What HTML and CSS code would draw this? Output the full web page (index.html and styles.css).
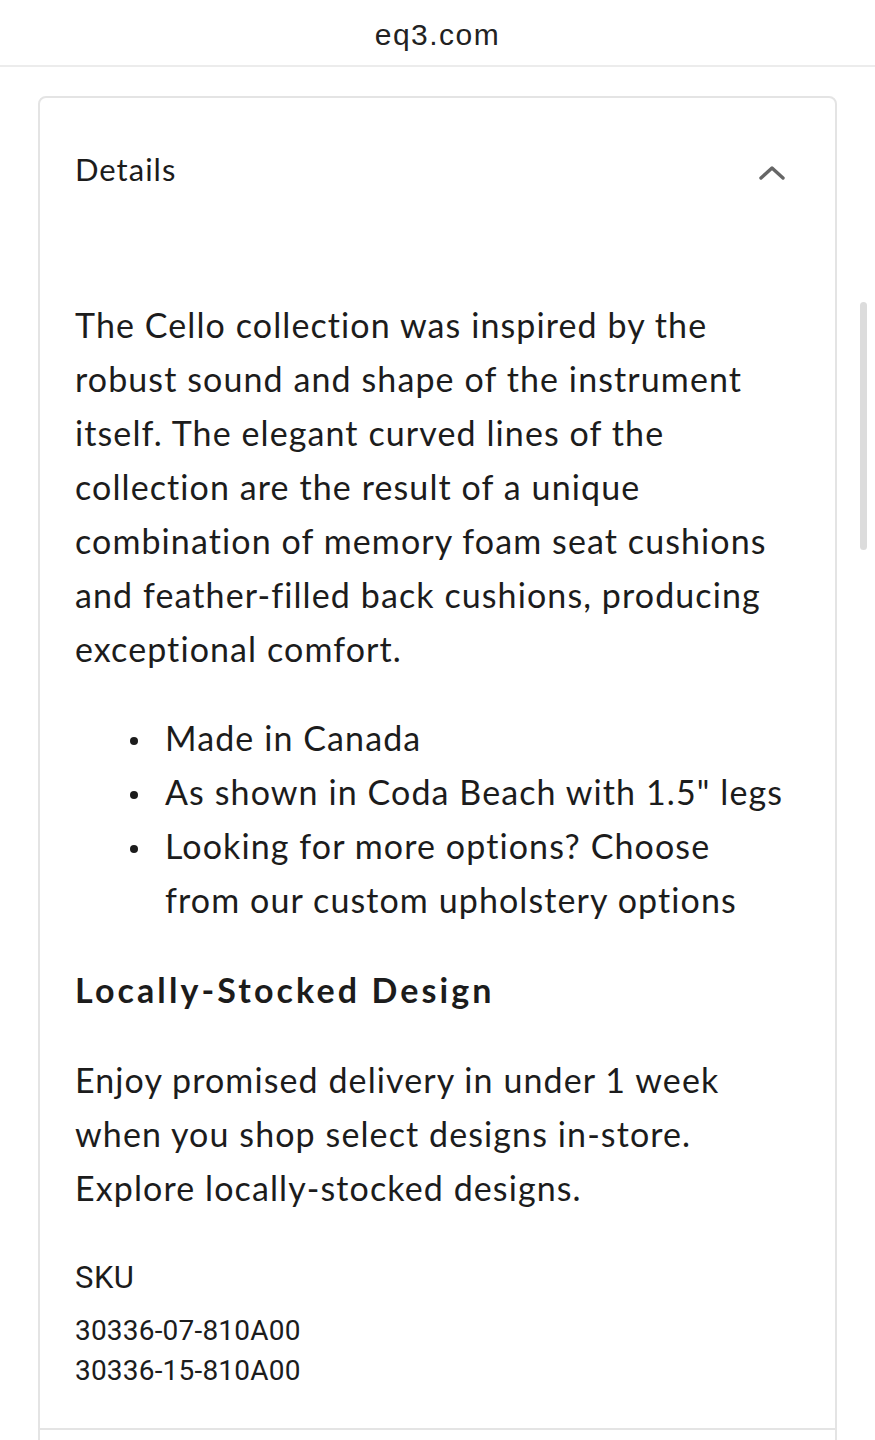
FILE: index.html
```html
<!DOCTYPE html>
<html lang="en">
<head>
<meta charset="utf-8">
<title>eq3.com – Details</title>
<link rel="stylesheet" href="styles.css">
</head>
<body>
<header class="topbar">
  <div class="domain">eq3.com</div>
</header>
<main class="page">
  <section class="accordion">
    <div class="acc-item">
      <div class="acc-head">
        <span class="acc-title">Details</span>
        <svg class="chev" width="28" height="16" viewBox="0 0 28 16" aria-hidden="true">
          <path d="M3 13 L14 3 L25 13" fill="none" stroke="#666" stroke-width="3.4" stroke-linecap="round" stroke-linejoin="round"/>
        </svg>
      </div>
      <div class="acc-body">
        <p class="copy">The Cello collection was inspired by the robust sound and shape of the instrument itself. The elegant curved lines of the collection are the result of a unique combination of memory foam seat cushions and feather-filled back cushions, producing exceptional comfort.</p>
        <ul class="bullets">
          <li>Made in Canada</li>
          <li>As shown in Coda Beach with 1.5" legs</li>
          <li>Looking for more options? Choose from our custom upholstery options</li>
        </ul>
        <h3 class="sub">Locally-Stocked Design</h3>
        <p class="copy">Enjoy promised delivery in under 1 week when you shop select designs in-store. Explore locally-stocked designs.</p>
        <div class="sku-label">SKU</div>
        <div class="sku-list">
          <div>30336-07-810A00</div>
          <div>30336-15-810A00</div>
        </div>
      </div>
    </div>
    <div class="acc-item next"></div>
  </section>
</main>
<div class="scroll-thumb"></div>
</body>
</html>
```
FILE: styles.css
```css
html, body {
  margin: 0;
  padding: 0;
  background: #ffffff;
}
body {
  font-family: Lato, "Open Sans", "Noto Sans", sans-serif;
  color: #1c1c1c;
  overflow: hidden;
}
.topbar {
  height: 65px;
  border-bottom: 2px solid #ececec;
  display: flex;
  align-items: center;
  justify-content: center;
}
.domain {
  font-family: "Liberation Sans", Arial, sans-serif;
  font-size: 30px;
  letter-spacing: 1.5px;
  color: #222;
  margin-top: 4px;
}
.page {
  padding: 29px 38px 0 38px;
}
.accordion {
  border: 2px solid #e4e4e4;
  border-radius: 8px;
}
.acc-head {
  height: 146px;
  padding: 0 49px 0 35px;
  display: flex;
  align-items: center;
  justify-content: space-between;
}
.acc-title {
  font-size: 31px;
  letter-spacing: 1px;
  margin-top: -4px;
}
.chev {
  display: block;
  margin-top: 4px;
}
.acc-body {
  padding: 54px 46px 37px 35px;
  border-bottom: 2px solid #e4e4e4;
}
.copy {
  margin: 0;
  font-size: 34px;
  line-height: 54px;
  letter-spacing: 1.1px;
}
.bullets {
  margin: 35px 0 0 0;
  padding: 0 0 0 90px;
  list-style: none;
  font-size: 34px;
  line-height: 54px;
  letter-spacing: 1.1px;
}
.bullets li {
  display: flex;
  margin-left: -35px;
}
.bullets li::before {
  content: "";
  flex: none;
  width: 8px;
  height: 8px;
  border-radius: 50%;
  background: #1c1c1c;
  margin: 26px 27px 0 0;
}
.sub {
  margin: 36px 0 36px 0;
  font-size: 34px;
  line-height: 54px;
  font-weight: 700;
  letter-spacing: 3.1px;
}
.sku-label {
  margin-top: 43px;
  font-family: Roboto, "Liberation Sans", sans-serif;
  font-size: 31px;
  line-height: 40px;
  letter-spacing: 0.5px;
}
.sku-list {
  margin-top: 13px;
  font-family: Roboto, "Liberation Sans", sans-serif;
  font-size: 28px;
  line-height: 40px;
  letter-spacing: 0.2px;
}
.acc-item.next {
  height: 60px;
}
.scroll-thumb {
  position: fixed;
  left: 860px;
  top: 302px;
  width: 7px;
  height: 248px;
  border-radius: 4px;
  background: #dcdcdc;
}
```
